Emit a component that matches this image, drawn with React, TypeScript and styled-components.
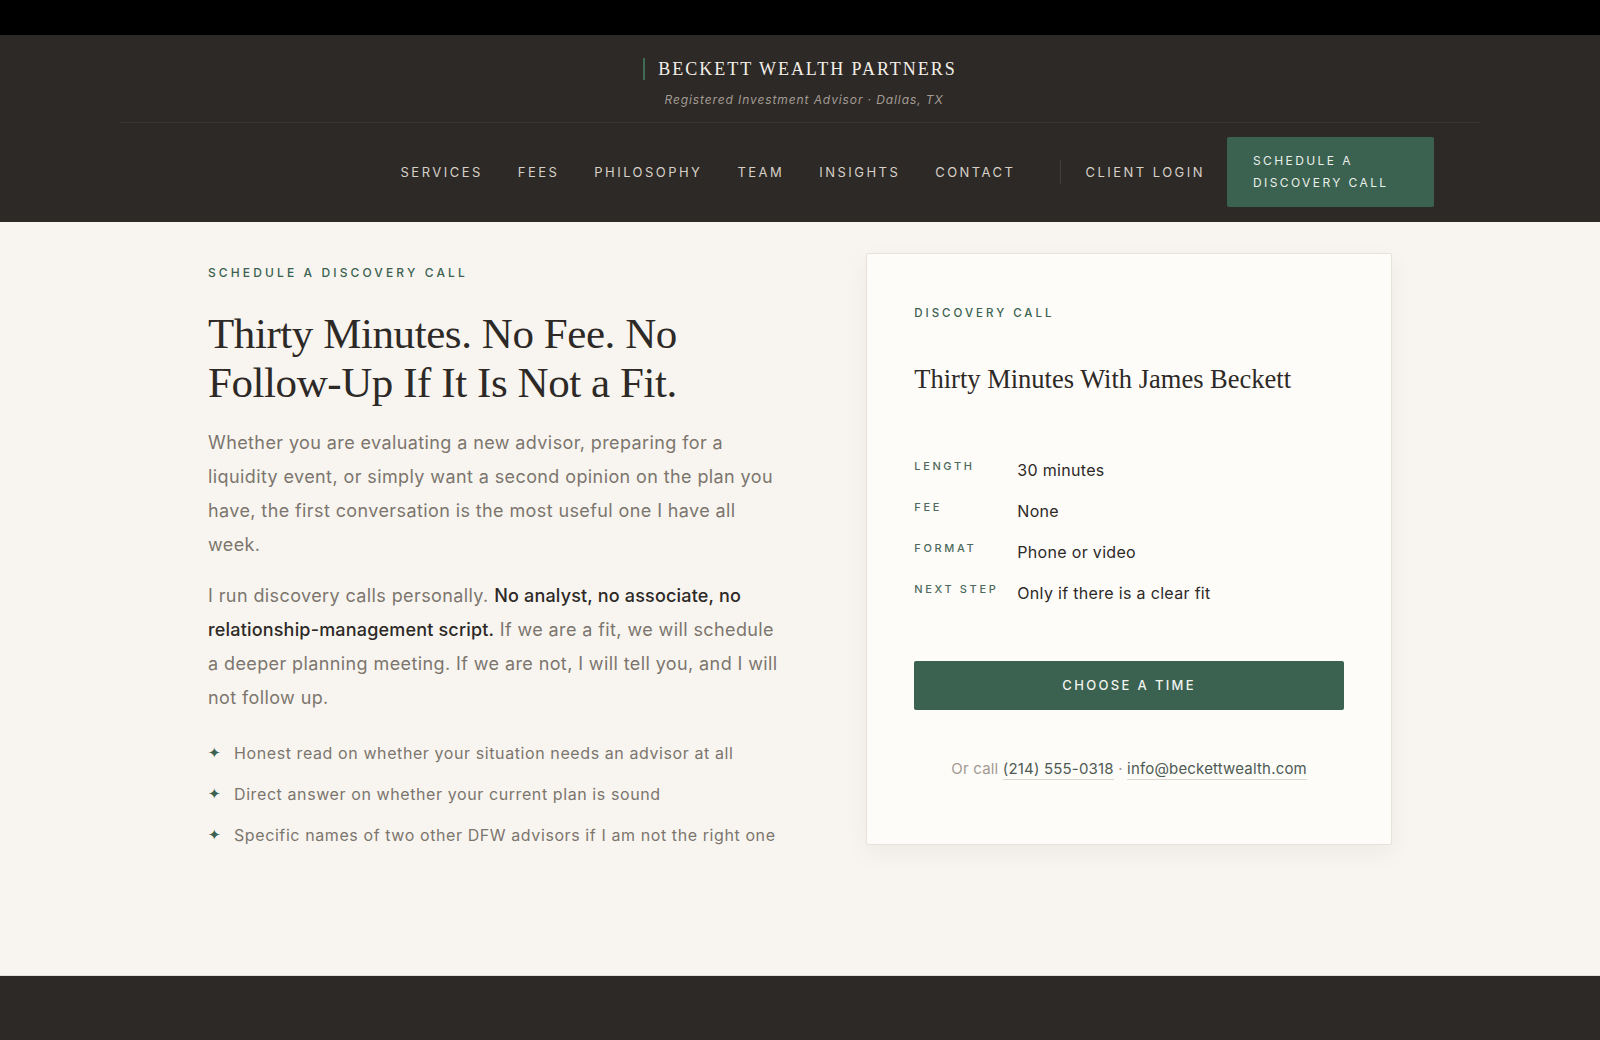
import React from "react";
import styled, { createGlobalStyle } from "styled-components";

const GlobalStyle = createGlobalStyle`
  * { box-sizing: border-box; }
  html, body { margin: 0; padding: 0; }
  body {
    background: #f8f5f0;
    font-family: "Inter", "Noto Sans", "Liberation Sans", sans-serif;
    color: #2d2926;
    -webkit-font-smoothing: antialiased;
  }
`;

const sans = `"Inter", "Noto Sans", "Liberation Sans", sans-serif`;
const serif = `"Liberation Serif", "DejaVu Serif", serif`;
const green = "#3b6150";
const dark = "#2d2926";

const TopStrip = styled.div`
  height: 35px;
  background: #000;
`;

const Header = styled.header`
  background: ${dark};
`;

const HeaderInner = styled.div`
  width: 1360px;
  margin: 0 auto;
`;

const BrandBlock = styled.div`
  display: flex;
  flex-direction: column;
  align-items: center;
  padding: 22px 0 15px;
  border-bottom: 1px solid #3a3531;
`;

const BrandName = styled.div`
  display: flex;
  align-items: center;
  font-family: ${serif};
  font-size: 18px;
  letter-spacing: 0.11em;
  color: #f3efe8;
  line-height: 24px;
  &::before {
    content: "";
    width: 2px;
    height: 22px;
    background: #3f6a55;
    margin-right: 13px;
  }
`;

const Tagline = styled.div`
  margin-top: 11px;
  font-family: ${sans};
  font-style: italic;
  font-size: 12px;
  letter-spacing: 0.075em;
  color: #a39c94;
  padding-left: 8px;
`;

const NavRow = styled.nav`
  display: flex;
  align-items: center;
  justify-content: flex-end;
  padding: 14px 46px 15px 0;
`;

const NavLinks = styled.div`
  display: flex;
  align-items: center;
  gap: 35px;
`;

const NavLink = styled.a`
  font-family: ${sans};
  font-size: 13px;
  letter-spacing: 0.19em;
  color: #d6d0c8;
  text-decoration: none;
  text-transform: uppercase;
`;

const NavDivider = styled.span`
  width: 1px;
  height: 24px;
  background: #443f3a;
  margin: 0 24px 0 45px;
`;

const CtaButton = styled.a`
  display: block;
  margin-left: 22px;
  width: 207px;
  padding: 13px 26px;
  background: ${green};
  border-radius: 2px;
  font-family: ${sans};
  font-size: 12px;
  line-height: 22px;
  letter-spacing: 0.2em;
  color: #e9f0ea;
  text-transform: uppercase;
  text-decoration: none;
`;

const Main = styled.main`
  padding: 31px 0 0;
  height: 753px;
`;

const Grid = styled.div`
  width: 1184px;
  margin: 0 auto;
  display: grid;
  grid-template-columns: 1.1fr 1fr;
  gap: 80px;
  align-items: start;
`;

const LeftCol = styled.section`
  padding-top: 12px;
`;

const Eyebrow = styled.div<{ $size?: number }>`
  font-family: ${sans};
  font-size: ${(p) => p.$size ?? 12}px;
  font-weight: 500;
  letter-spacing: 0.26em;
  color: ${green};
  text-transform: uppercase;
  line-height: 16px;
`;

const Headline = styled.h1`
  margin: 28px 0 19px;
  max-width: 560px;
  font-family: ${serif};
  font-weight: 400;
  font-size: 43px;
  line-height: 49px;
  letter-spacing: -0.01em;
  color: ${dark};
`;

const Para = styled.p`
  margin: 0 0 17px;
  font-family: ${sans};
  font-size: 18px;
  line-height: 34px;
  letter-spacing: 0.022em;
  color: #7c756e;
  strong {
    font-weight: 500;
    letter-spacing: 0.01em;
    color: ${dark};
  }
`;

const BulletList = styled.ul`
  list-style: none;
  margin: 26px 0 0;
  padding: 0;
  display: flex;
  flex-direction: column;
  gap: 17px;
`;

const Bullet = styled.li`
  display: flex;
  align-items: center;
  font-family: ${sans};
  font-size: 16px;
  line-height: 24px;
  letter-spacing: 0.037em;
  color: #7c756e;
  &::before {
    content: "✦";
    color: ${green};
    font-size: 15px;
    width: 26px;
    flex: none;
  }
`;

const Card = styled.aside`
  background: #fdfcf9;
  border: 1px solid #e6e1d9;
  border-radius: 2px;
  box-shadow: 0 8px 24px rgba(45, 41, 38, 0.05);
  padding: 51px 47px 64px;
`;

const CardTitle = styled.h2`
  margin: 40px 0 61px;
  font-family: ${serif};
  font-weight: 400;
  font-size: 26.5px;
  line-height: 36px;
  color: ${dark};
`;

const Details = styled.dl`
  margin: 0;
  display: flex;
  flex-direction: column;
  gap: 17px;
`;

const DetailRow = styled.div`
  display: grid;
  grid-template-columns: 103px 1fr;
  align-items: start;
`;

const DetailLabel = styled.dt`
  font-family: ${sans};
  font-size: 11px;
  font-weight: 500;
  letter-spacing: 0.24em;
  line-height: 16px;
  text-transform: uppercase;
  color: #4d6a5c;
`;

const DetailValue = styled.dd`
  margin: 0;
  font-family: ${sans};
  font-size: 16px;
  line-height: 24px;
  letter-spacing: 0.02em;
  color: ${dark};
`;

const ChooseButton = styled.a`
  display: block;
  margin-top: 56px;
  height: 49px;
  line-height: 49px;
  background: ${green};
  border-radius: 2px;
  text-align: center;
  font-family: ${sans};
  font-size: 13px;
  font-weight: 500;
  letter-spacing: 0.18em;
  color: #f1f4ef;
  text-transform: uppercase;
  text-decoration: none;
`;

const ContactLine = styled.p`
  margin: 48px 0 0;
  text-align: center;
  font-family: ${sans};
  font-size: 15px;
  line-height: 22px;
  letter-spacing: 0.012em;
  color: #a29a92;
`;

const ContactLink = styled.a`
  color: #4e5a53;
  text-decoration: none;
  border-bottom: 1px solid #dcd7cf;
  padding-bottom: 1px;
`;

const Footer = styled.footer`
  height: 66px;
  background: ${dark};
  border-top: 1px solid #e3ded6;
`;

const navItems = ["Services", "Fees", "Philosophy", "Team", "Insights", "Contact"];

const details = [
  ["Length", "30 minutes"],
  ["Fee", "None"],
  ["Format", "Phone or video"],
  ["Next step", "Only if there is a clear fit"],
];

const bullets = [
  "Honest read on whether your situation needs an advisor at all",
  "Direct answer on whether your current plan is sound",
  "Specific names of two other DFW advisors if I am not the right one",
];

export default function App() {
  return (
    <>
      <GlobalStyle />
      <TopStrip />
      <Header>
        <HeaderInner>
          <BrandBlock>
            <BrandName>BECKETT WEALTH PARTNERS</BrandName>
            <Tagline>Registered Investment Advisor · Dallas, TX</Tagline>
          </BrandBlock>
          <NavRow>
            <NavLinks>
              {navItems.map((n) => (
                <NavLink key={n} href="#">
                  {n}
                </NavLink>
              ))}
            </NavLinks>
            <NavDivider />
            <NavLink href="#">Client Login</NavLink>
            <CtaButton href="#">
              Schedule a
              <br />
              Discovery Call
            </CtaButton>
          </NavRow>
        </HeaderInner>
      </Header>
      <Main>
        <Grid>
          <LeftCol>
            <Eyebrow>Schedule a Discovery Call</Eyebrow>
            <Headline>Thirty Minutes. No Fee. No Follow-Up If It Is Not a Fit.</Headline>
            <Para>
              Whether you are evaluating a new advisor, preparing for a liquidity event, or
              simply want a second opinion on the plan you have, the first conversation is the
              most useful one I have all week.
            </Para>
            <Para>
              I run discovery calls personally.{" "}
              <strong>No analyst, no associate, no relationship-management script.</strong> If we
              are a fit, we will schedule a deeper planning meeting. If we are not, I will tell
              you, and I will not follow up.
            </Para>
            <BulletList>
              {bullets.map((b) => (
                <Bullet key={b}>{b}</Bullet>
              ))}
            </BulletList>
          </LeftCol>
          <Card>
            <Eyebrow $size={11.5}>Discovery Call</Eyebrow>
            <CardTitle>Thirty Minutes With James Beckett</CardTitle>
            <Details>
              {details.map(([k, v]) => (
                <DetailRow key={k}>
                  <DetailLabel>{k}</DetailLabel>
                  <DetailValue>{v}</DetailValue>
                </DetailRow>
              ))}
            </Details>
            <ChooseButton href="#">Choose a Time</ChooseButton>
            <ContactLine>
              Or call <ContactLink href="#">(214) 555-0318</ContactLink> ·{" "}
              <ContactLink href="#">info@beckettwealth.com</ContactLink>
            </ContactLine>
          </Card>
        </Grid>
      </Main>
      <Footer />
    </>
  );
}
